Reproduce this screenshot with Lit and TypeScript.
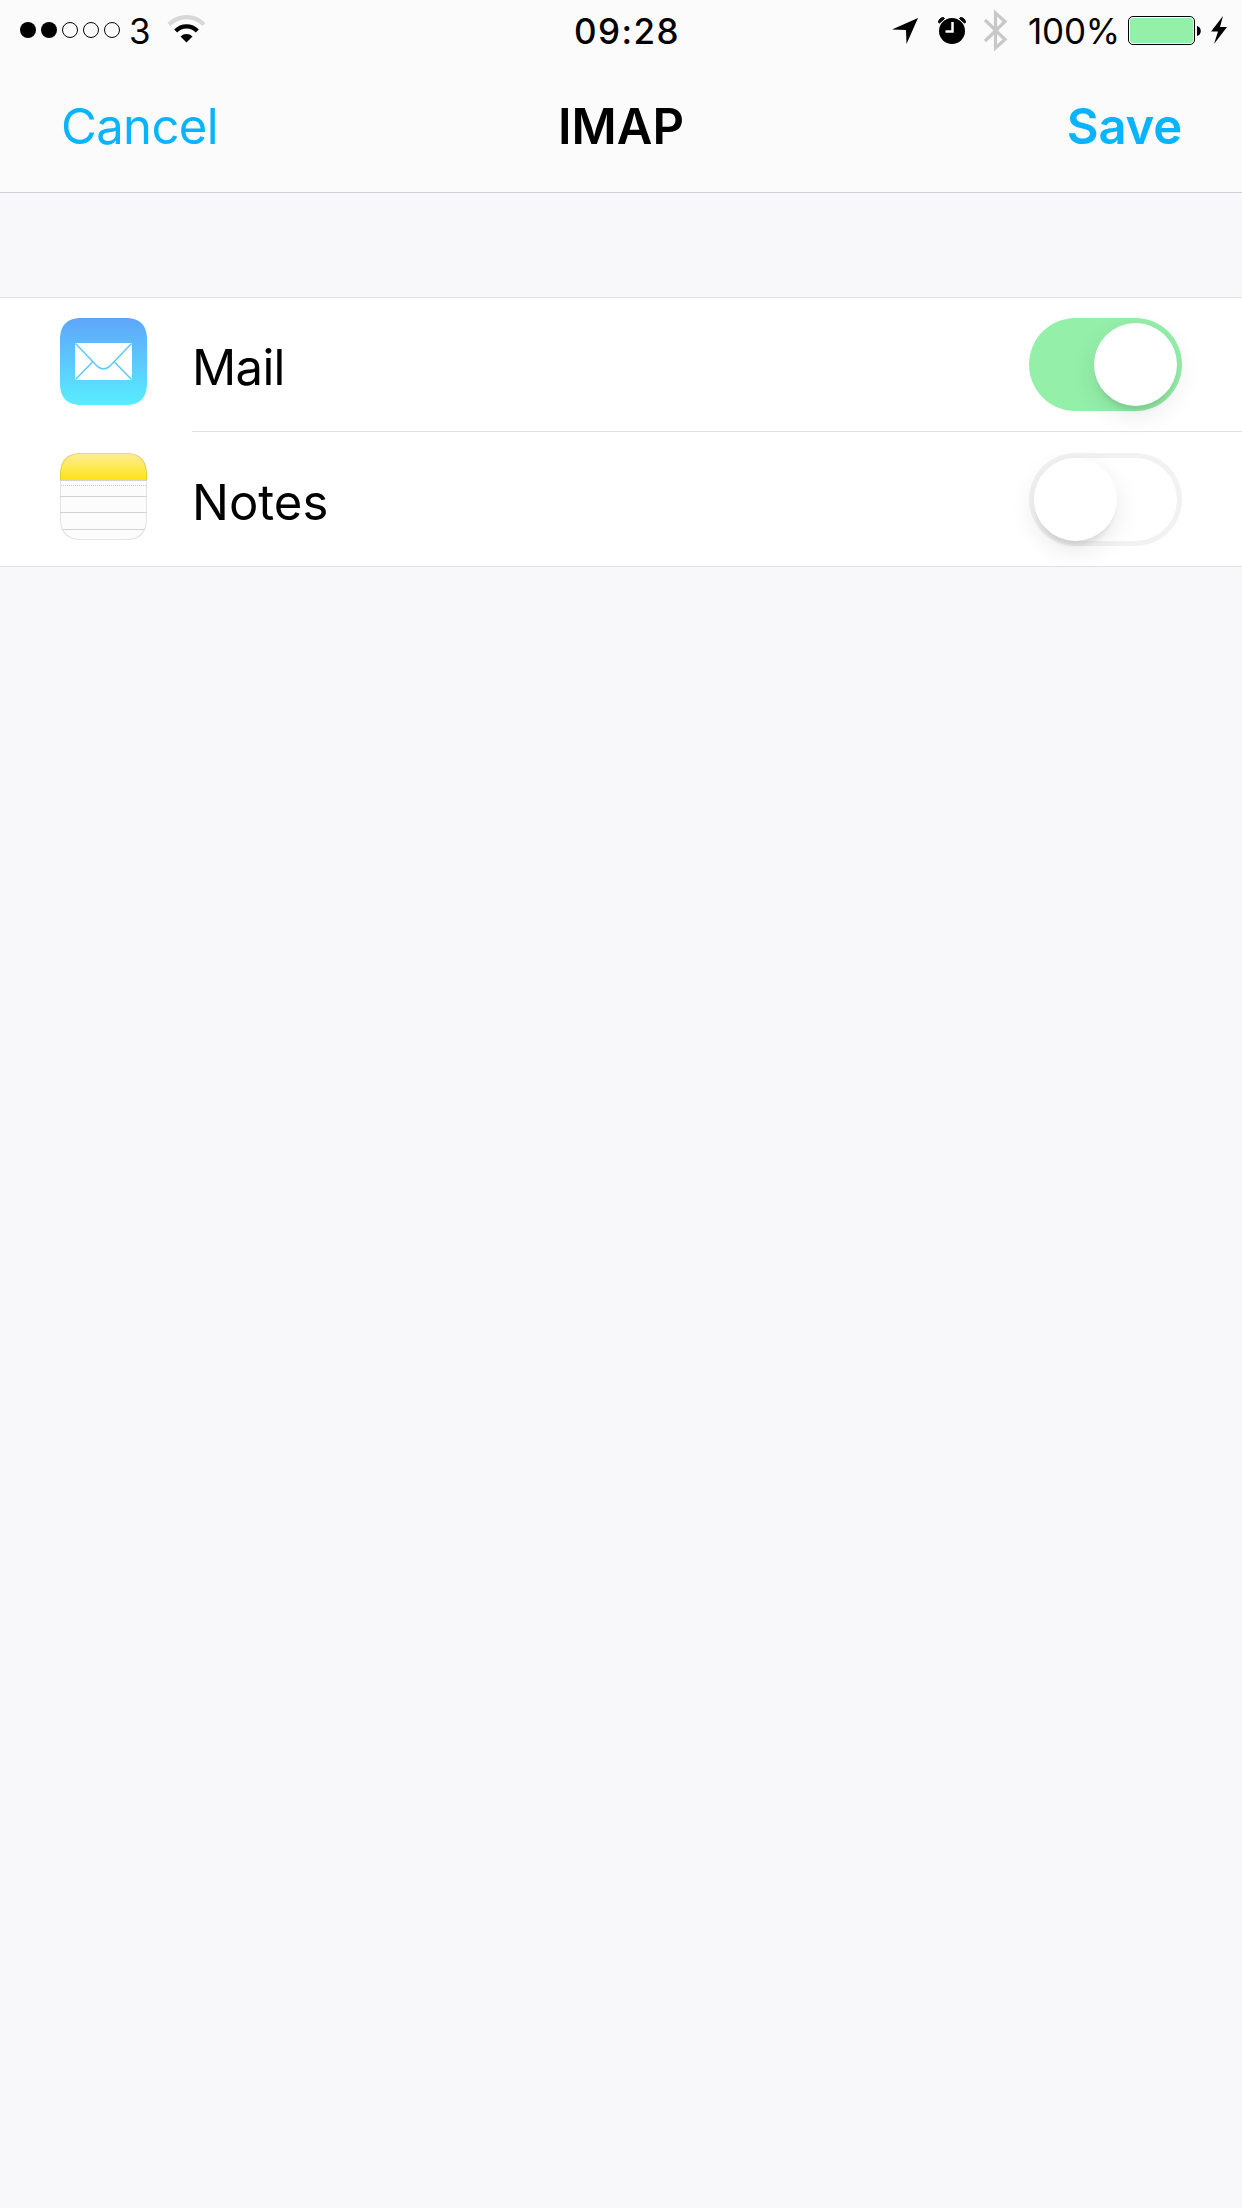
import { LitElement, html, css, svg } from "lit";
import { customElement, property } from "lit/decorators.js";

@customElement("status-bar")
class StatusBar extends LitElement {
  static styles = css`
    :host {
      display: grid;
      grid-template-columns: 575px 300px 1fr;
      height: 60px;
      font-size: 35px;
      line-height: 62px;
      color: #000;
    }
    svg { display: block; flex: none; }
    .group { display: flex; height: 60px; }
    .left { padding-left: 20px; }
    .carrier { width: 26px; margin-left: 9px; }
    .wifi { margin-left: 12px; }
    .time { font-weight: 500; letter-spacing: 1.4px; margin-left: -1px; }
    .right { justify-content: flex-end; }
    .percent { font-weight: 400; letter-spacing: -0.2px; width: 99px; margin-left: 20px; margin-right: 1px; white-space: nowrap; }
    .carrier { font-weight: 400; }
    .location { margin-right: 20px; }
    .alarm { margin-right: 18px; }
    .battery { margin-right: 10px; }
    .bolt { margin-right: 14px; }
  `;
  render() {
    return html`
      <div class="group left">
        <svg width="100" height="60" viewBox="0 0 100 60">
          ${[0, 1, 2, 3, 4].map(
            (i) => svg`<circle cx=${8 + i * 21} cy="30" r=${i < 2 ? 8 : 7.5}
              fill=${i < 2 ? "#000" : "none"} stroke=${i < 2 ? "none" : "#000"}/>`
          )}
        </svg>
        <span class="carrier">3</span>
        <svg class="wifi" width="38" height="60" viewBox="167 0 38 60">
          <path d="M169 24.500a24.500 24.500 0 0 1 35 0" fill="none" stroke="#d8d8d8" stroke-width="4.200"/>
          <path d="M175.700 31a15 15 0 0 1 21.600 0" fill="none" stroke="#000" stroke-width="4.200"/>
          <path d="M186.500 42.500l-6-6a8.500 8.500 0 0 1 12 0z"/>
        </svg>
      </div>
      <span class="time">09:28</span>
      <div class="group right">
        <svg class="location" width="26" height="60" viewBox="892 0 26 60"><path d="M918 18L906.500 44L906 30L892 29.500z"/></svg>
        <svg class="alarm" width="28" height="60" viewBox="938 0 28 60">
          <circle cx="952" cy="31" r="13"/>
          <path d="M938.500 22.500a5 5 0 0 1 5-5L944.500 18.500L939.500 23zM965.500 22.500a5 5 0 0 0-5-5L959.500 18.500L964.500 23z" stroke="#000" stroke-width="1"/>
          <path d="M952.500 22v9.500H945.500" fill="none" stroke="#fbfbfb" stroke-width="2.500"/>
        </svg>
        <svg width="24" height="60" viewBox="984 0 24 60"><path d="M985 20L1005 39.500L995.500 48V13L1005 21.500L985 41" fill="none" stroke="#c8c8c8" stroke-width="3.200"/></svg>
        <span class="percent">100%</span>
        <svg class="battery" width="73" height="60" viewBox="1128 0 73 60">
          <rect x="1128.500" y="16.500" width="66" height="28" rx="4.500" fill="#fff" stroke="#000"/>
          <rect x="1130" y="18" width="63" height="25" rx="3" fill="#94efa9"/>
          <path d="M1197 26c5 1 5 9 0 10z"/>
        </svg>
        <svg class="bolt" width="17" height="60" viewBox="1211 0 17 60"><path d="M1223 16L1211 31.500H1218L1214 44L1227 27H1220z"/></svg>
      </div>
    `;
  }
}

@customElement("nav-bar")
class NavBar extends LitElement {
  static styles = css`
    :host {
      display: grid;
      grid-template-columns: 1fr auto 1fr;
      height: 132px;
      line-height: 134px;
      padding: 0 60px;
      font-size: 49px;
    }
    .action { color: #08b4ff; }
    .cancel { font-weight: 400; letter-spacing: -0.6px; padding-left: 1px; }
    .save { font-weight: 600; text-align: right; letter-spacing: -0.2px; }
    .title { font-weight: 600; }
  `;
  render() {
    return html`
      <span class="action cancel">Cancel</span>
      <span class="title">IMAP</span>
      <span class="action save">Save</span>
    `;
  }
}

@customElement("toggle-switch")
class ToggleSwitch extends LitElement {
  @property({ type: Boolean, reflect: true }) on = false;
  static styles = css`
    :host {
      box-sizing: border-box;
      display: flex;
      width: 153px;
      height: 93px;
      padding: 5px;
      border-radius: 47px;
      background: #fff;
      box-shadow: inset 0 0 0 5px #f2f2f2;
    }
    :host([on]) { background: #94efa9; box-shadow: none; justify-content: flex-end; }
    .knob {
      width: 83px;
      height: 83px;
      border-radius: 50%;
      background: #fff;
      box-shadow: 0 9px 26px rgba(0, 0, 0, 0.09), 0 7px 5px -3px rgba(0, 0, 0, 0.09);
    }
  `;
  render() {
    return html`<div class="knob"></div>`;
  }
}

@customElement("mail-icon")
class MailIcon extends LitElement {
  static styles = css`svg { display: block; }`;
  render() {
    return html`<svg width="87" height="87" viewBox="0 0 87 87">
      <defs><linearGradient id="g" x2="0" y2="1"><stop stop-color="#5fa5fa"/><stop offset="1" stop-color="#58edff"/></linearGradient></defs>
      <path fill="url(#g)" d="M22 0H65C80 0 87 7 87 22V65C87 80 80 87 65 87H22C7 87 0 80 0 65V22C0 7 7 0 22 0z"/>
      <rect x="15" y="25" width="57" height="37" fill="#fff"/>
      <g fill="none" stroke="#5fc8fc" stroke-width="1.500">
        <path d="M15.500 25.500L36.500 47.500Q43.500 54.500 50.500 47.500L71.500 25.500"/>
        <path d="M15.500 61.500L32.500 44M71.500 61.500L54.500 44"/>
      </g>
    </svg>`;
  }
}

@customElement("notes-icon")
class NotesIcon extends LitElement {
  static styles = css`svg { display: block; }`;
  render() {
    const outline = "M22 0H65C80 0 87 7 87 22V65C87 80 80 87 65 87H22C7 87 0 80 0 65V22C0 7 7 0 22 0z";
    return html`<svg width="87" height="87" viewBox="0 0 87 87">
      <defs>
        <linearGradient id="y" x2="0" y2="1"><stop stop-color="#fdee98"/><stop offset="1" stop-color="#fee317"/></linearGradient>
        <clipPath id="c"><path d=${outline}/></clipPath>
      </defs>
      <g clip-path="url(#c)">
        <rect width="87" height="87" fill="#fcfcfc"/>
        <rect width="87" height="27" fill="url(#y)"/>
        <path d=${outline} fill="none" stroke="#000" stroke-opacity=".12" stroke-width="1.500"/>
        <path d="M0 27.500H87M0 43.500H87M0 59.500H87M0 76.500H87" stroke="#d2d2d2"/>
        <path d="M1 32.500H87" stroke="#c8c8c8" stroke-dasharray="1 1"/>
      </g>
    </svg>`;
  }
}

@customElement("app-root")
class AppRoot extends LitElement {
  static styles = css`
    :host {
      display: block;
      min-height: 2208px;
      background: #f8f8fb;
      font-family: Inter, "Liberation Sans", sans-serif;
      color: #000;
    }
    .header { background: #fbfbfb; border-bottom: 1px solid #d0d0d4; }
    .list {
      margin-top: 104px;
      background: #fff;
      border-top: 1px solid #e2e2e4;
      border-bottom: 1px solid #e2e2e4;
    }
    .row { display: flex; height: 134px; padding-left: 60px; }
    .icon { margin-top: 20px; }
    .row + .row .icon, .row + .row toggle-switch { margin-top: 21px; }
    .content {
      box-sizing: border-box;
      flex: 1;
      display: flex;
      justify-content: space-between;
      margin-left: 45px;
      padding-right: 60px;
      border-bottom: 1px solid #e2e2e4;
    }
    .row:last-child .content { border-bottom: none; }
    .label { font-size: 49px; font-weight: 400; letter-spacing: 0; line-height: 140px; height: 133px; }
    .row:first-child .label { letter-spacing: -0.7px; }
    .row + .row .label { line-height: 142px; }
    toggle-switch { margin-top: 20px; }
  `;
  render() {
    return html`
      <div class="header">
        <status-bar></status-bar>
        <nav-bar></nav-bar>
      </div>
      <div class="list">
        <div class="row">
          <mail-icon class="icon"></mail-icon>
          <div class="content"><span class="label">Mail</span><toggle-switch on></toggle-switch></div>
        </div>
        <div class="row">
          <notes-icon class="icon"></notes-icon>
          <div class="content"><span class="label">Notes</span><toggle-switch></toggle-switch></div>
        </div>
      </div>
    `;
  }
}
